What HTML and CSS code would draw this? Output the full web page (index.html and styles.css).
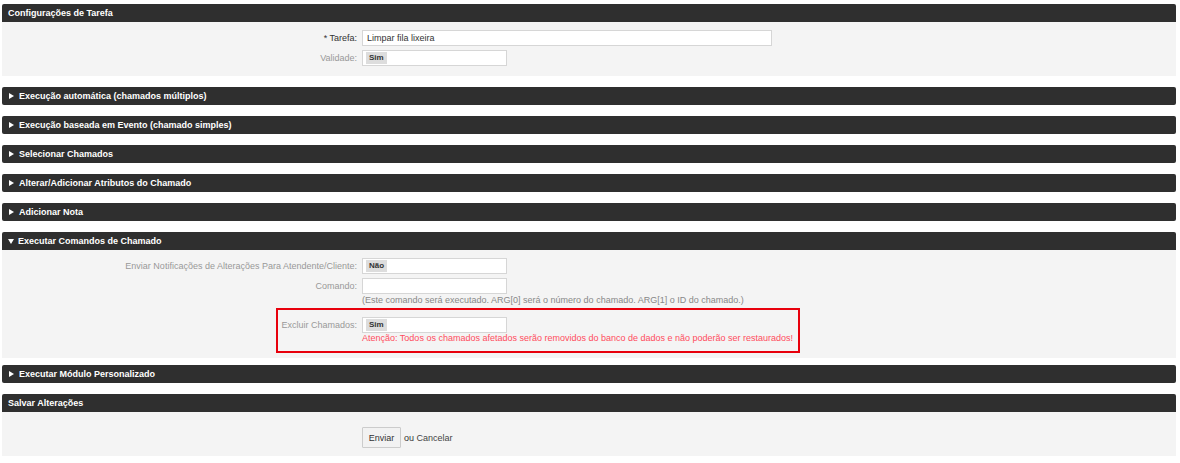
FILE: index.html
```html
<!DOCTYPE html>
<html lang="pt-BR">
<head>
    <meta charset="UTF-8">
    <title>Tarefa Genérica do Agente</title>
    <link rel="stylesheet" href="styles.css">
</head>
<body>
    <div class="widget">
        <div class="header"><h2>Configurações de Tarefa</h2></div>
        <div class="content">
            <div class="row">
                <label class="label mandatory"><span class="star">*</span> Tarefa:</label>
                <div class="field"><div class="input wide">Limpar fila lixeira</div></div>
            </div>
            <div class="row">
                <label class="label">Validade:</label>
                <div class="field"><div class="input select"><span class="tag">Sim</span></div></div>
            </div>
        </div>
    </div>

    <div class="widget collapsed">
        <div class="header"><h2><span class="toggle right"></span>Execução automática (chamados múltiplos)</h2></div>
    </div>
    <div class="widget collapsed">
        <div class="header"><h2><span class="toggle right"></span>Execução baseada em Evento (chamado simples)</h2></div>
    </div>
    <div class="widget collapsed">
        <div class="header"><h2><span class="toggle right"></span>Selecionar Chamados</h2></div>
    </div>
    <div class="widget collapsed">
        <div class="header"><h2><span class="toggle right"></span>Alterar/Adicionar Atributos do Chamado</h2></div>
    </div>
    <div class="widget collapsed">
        <div class="header"><h2><span class="toggle right"></span>Adicionar Nota</h2></div>
    </div>

    <div class="widget commands">
        <div class="header"><h2><span class="toggle down"></span>Executar Comandos de Chamado</h2></div>
        <div class="content">
            <div class="row">
                <label class="label">Enviar Notificações de Alterações Para Atendente/Cliente:</label>
                <div class="field"><div class="input select"><span class="tag">Não</span></div></div>
            </div>
            <div class="row">
                <label class="label">Comando:</label>
                <div class="field">
                    <div class="input select"></div>
                    <p class="hint">(Este comando será executado. ARG[0] será o número do chamado. ARG[1] o ID do chamado.)</p>
                </div>
            </div>
            <div class="row highlight">
                <label class="label">Excluir Chamados:</label>
                <div class="field">
                    <div class="input select"><span class="tag">Sim</span></div>
                    <p class="warning">Atenção: Todos os chamados afetados serão removidos do banco de dados e não poderão ser restaurados!</p>
                </div>
            </div>
        </div>
    </div>

    <div class="widget collapsed">
        <div class="header"><h2><span class="toggle right"></span>Executar Módulo Personalizado</h2></div>
    </div>

    <div class="widget">
        <div class="header"><h2>Salvar Alterações</h2></div>
        <div class="content submit">
            <div class="row">
                <span class="label"></span>
                <div class="field actions">
                    <button class="primary">Enviar</button>
                    <span>ou <a href="#">Cancelar</a></span>
                </div>
            </div>
        </div>
    </div>
</body>
</html>
```

FILE: styles.css
```css
* {
    margin: 0;
    padding: 0;
    box-sizing: border-box;
}

body {
    padding: 4px 4px 0 2px;
    background: #fff;
    font-family: 'Liberation Sans', Arial, sans-serif;
    font-size: 9px;
    color: #333;
}

.widget {
    margin-bottom: 11px;
}

.header {
    height: 18px;
    background: #2f2f2f;
    border-radius: 2px 2px 0 0;
    display: flex;
    align-items: center;
    padding-left: 6px;
}

.collapsed .header {
    border-radius: 2px;
}

.header h2 {
    font-size: 9px;
    font-weight: bold;
    color: #fff;
    display: flex;
    align-items: center;
}

.toggle {
    display: inline-block;
    width: 0;
    height: 0;
    margin-right: 5px;
}

.toggle.right {
    border-top: 3.5px solid transparent;
    border-bottom: 3.5px solid transparent;
    border-left: 5px solid #fff;
    margin-left: 1px;
}

.toggle.down {
    border-left: 3.5px solid transparent;
    border-right: 3.5px solid transparent;
    border-top: 5px solid #fff;
    margin-right: 4px;
}

.content {
    background: #f4f4f4;
    padding: 8px 0 10px;
    display: flex;
    flex-direction: column;
    gap: 4px;
}

.row {
    display: flex;
    align-items: flex-start;
}

.label {
    width: 360px;
    flex-shrink: 0;
    text-align: right;
    padding-right: 5px;
    line-height: 16px;
    color: #999;
    white-space: nowrap;
}

.label.mandatory {
    color: #333;
}

.input {
    height: 16px;
    background: #fff;
    border: 1px solid #d6d6d6;
    padding: 0 4px;
    display: flex;
    align-items: center;
    color: #333;
}

.input.wide {
    width: 410px;
}

.input.select {
    width: 145px;
    padding: 0 3px;
}

.tag {
    background: #ddd;
    padding: 1px 3px;
    font-size: 8px;
    font-weight: bold;
    color: #333;
    line-height: 10px;
}

.hint {
    color: #888;
    line-height: 11px;
    margin-top: 1px;
}

.commands {
    margin-bottom: 7px;
}

.commands .content {
    padding-bottom: 5px;
}

.highlight {
    margin-top: -2px;
    margin-left: 274px;
    width: 524px;
    border: 2px solid #e8000c;
    padding: 7px 0 7px;
}

.highlight .label {
    width: 84px;
}

.warning {
    color: #ff4c5d;
    line-height: 11px;
}

.submit {
    padding: 15px 0 8px;
}

.actions {
    display: flex;
    align-items: center;
    gap: 3px;
    color: #333;
}

.actions a {
    color: #444;
    text-decoration: none;
}

button.primary {
    font-family: 'Liberation Sans', Arial, sans-serif;
    font-size: 9px;
    color: #333;
    background: #f2f2f2;
    border: 1px solid #ccc;
    height: 21px;
    width: 39px;
    border-radius: 1px;
}
```
